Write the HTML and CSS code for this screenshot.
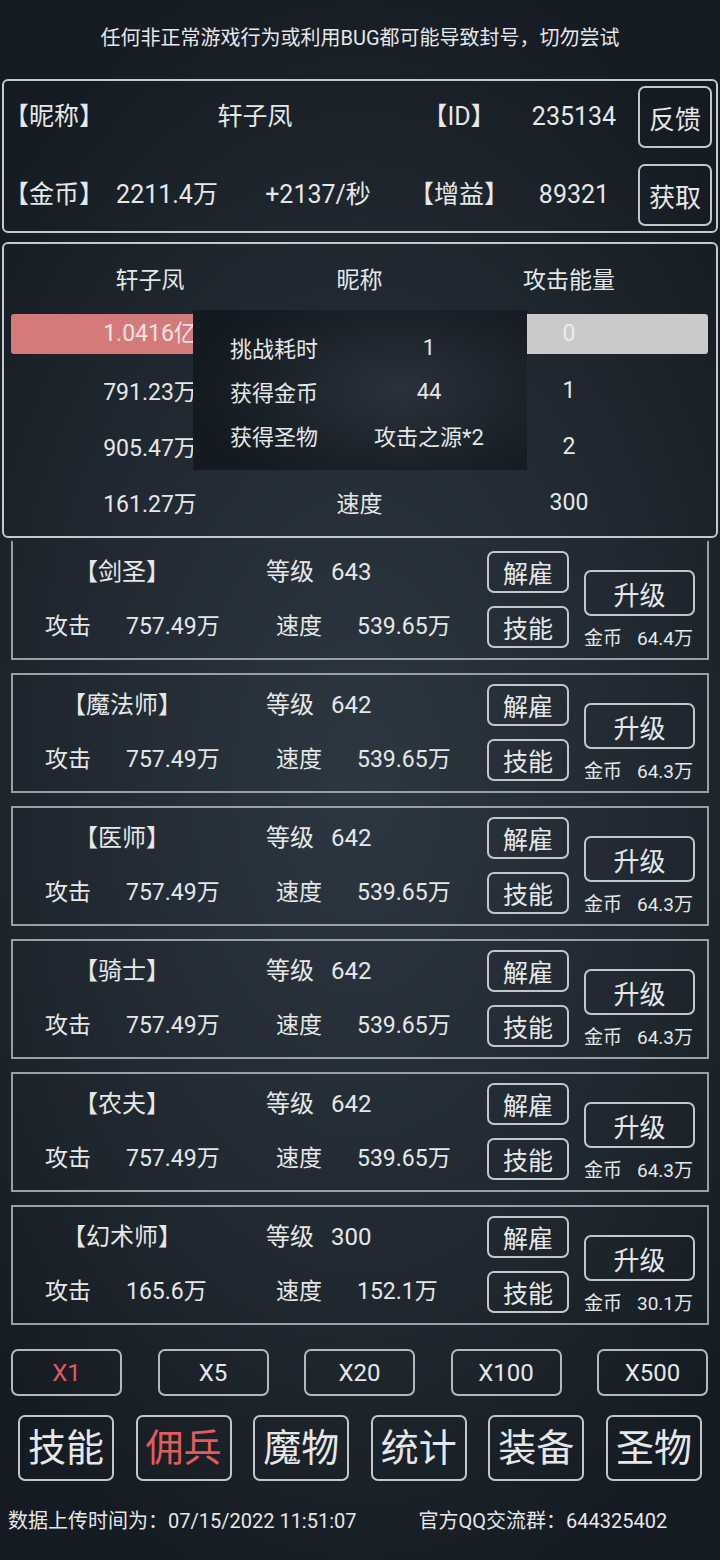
FILE: index.html
```html
<!DOCTYPE html>
<html lang="zh">
<head>
    <meta charset="UTF-8">
    <meta name="viewport" content="width=device-width, initial-scale=1.0">
    <title>佣兵</title>
    <link rel="stylesheet" href="styles.css">
</head>
<body>
    <!-- 提示 -->
    <div class="notice">任何非正常游戏行为或利用BUG都可能导致封号，切勿尝试</div>

    <!-- 玩家信息 -->
    <div class="info">
        <div class="info-row">
            <span class="label">【昵称】</span>
            <span class="cell wide">轩子凤</span>
            <span class="cell">【ID】</span>
            <span class="cell">235134</span>
            <button class="btn side">反馈</button>
        </div>
        <div class="info-row">
            <span class="label">【金币】</span>
            <span class="cell">2211.4万</span>
            <span class="cell">+2137/秒</span>
            <span class="cell">【增益】</span>
            <span class="cell">89321</span>
            <button class="btn side">获取</button>
        </div>
    </div>

    <!-- 战斗面板 -->
    <div class="battle">
        <div class="b-grid">
            <span>轩子凤</span><span>昵称</span><span>攻击能量</span>
            <div class="bar hp">1.0416亿</div><span></span><div class="bar energy">0</div>
            <span>791.23万</span><span></span><span>1</span>
            <span>905.47万</span><span></span><span>2</span>
            <span>161.27万</span><span>速度</span><span>300</span>
        </div>
        <div class="result">
            <span class="r-key">挑战耗时</span><span class="r-val">1</span>
            <span class="r-key">获得金币</span><span class="r-val">44</span>
            <span class="r-key">获得圣物</span><span class="r-val">攻击之源*2</span>
        </div>
    </div>

    <!-- 佣兵列表 -->
    <div class="heroes">
        <div class="hero">
            <div class="stats">
                <div class="s-top"><span class="h-name">【剑圣】</span><span class="lv">等级</span><span class="lv-num">643</span></div>
                <div class="s-bot"><span>攻击</span><span>757.49万</span><span>速度</span><span>539.65万</span></div>
            </div>
            <div class="acts"><button class="btn small">解雇</button><button class="btn small">技能</button></div>
            <div class="up"><button class="btn big">升级</button><div class="cost"><span>金币</span><span>64.4万</span></div></div>
        </div>
        <div class="hero">
            <div class="stats">
                <div class="s-top"><span class="h-name">【魔法师】</span><span class="lv">等级</span><span class="lv-num">642</span></div>
                <div class="s-bot"><span>攻击</span><span>757.49万</span><span>速度</span><span>539.65万</span></div>
            </div>
            <div class="acts"><button class="btn small">解雇</button><button class="btn small">技能</button></div>
            <div class="up"><button class="btn big">升级</button><div class="cost"><span>金币</span><span>64.3万</span></div></div>
        </div>
        <div class="hero">
            <div class="stats">
                <div class="s-top"><span class="h-name">【医师】</span><span class="lv">等级</span><span class="lv-num">642</span></div>
                <div class="s-bot"><span>攻击</span><span>757.49万</span><span>速度</span><span>539.65万</span></div>
            </div>
            <div class="acts"><button class="btn small">解雇</button><button class="btn small">技能</button></div>
            <div class="up"><button class="btn big">升级</button><div class="cost"><span>金币</span><span>64.3万</span></div></div>
        </div>
        <div class="hero">
            <div class="stats">
                <div class="s-top"><span class="h-name">【骑士】</span><span class="lv">等级</span><span class="lv-num">642</span></div>
                <div class="s-bot"><span>攻击</span><span>757.49万</span><span>速度</span><span>539.65万</span></div>
            </div>
            <div class="acts"><button class="btn small">解雇</button><button class="btn small">技能</button></div>
            <div class="up"><button class="btn big">升级</button><div class="cost"><span>金币</span><span>64.3万</span></div></div>
        </div>
        <div class="hero">
            <div class="stats">
                <div class="s-top"><span class="h-name">【农夫】</span><span class="lv">等级</span><span class="lv-num">642</span></div>
                <div class="s-bot"><span>攻击</span><span>757.49万</span><span>速度</span><span>539.65万</span></div>
            </div>
            <div class="acts"><button class="btn small">解雇</button><button class="btn small">技能</button></div>
            <div class="up"><button class="btn big">升级</button><div class="cost"><span>金币</span><span>64.3万</span></div></div>
        </div>
        <div class="hero">
            <div class="stats">
                <div class="s-top"><span class="h-name">【幻术师】</span><span class="lv">等级</span><span class="lv-num">300</span></div>
                <div class="s-bot"><span>攻击</span><span>165.6万</span><span>速度</span><span>152.1万</span></div>
            </div>
            <div class="acts"><button class="btn small">解雇</button><button class="btn small">技能</button></div>
            <div class="up"><button class="btn big">升级</button><div class="cost"><span>金币</span><span>30.1万</span></div></div>
        </div>
    </div>

    <!-- 倍数 -->
    <div class="multi">
        <button class="btn mul active">X1</button>
        <button class="btn mul">X5</button>
        <button class="btn mul">X20</button>
        <button class="btn mul">X100</button>
        <button class="btn mul">X500</button>
    </div>

    <!-- 菜单 -->
    <div class="tabs">
        <button class="btn tab">技能</button>
        <button class="btn tab active">佣兵</button>
        <button class="btn tab">魔物</button>
        <button class="btn tab">统计</button>
        <button class="btn tab">装备</button>
        <button class="btn tab">圣物</button>
    </div>

    <div class="footer">
        <span>数据上传时间为：07/15/2022 11:51:07</span>
        <span>官方QQ交流群：644325402</span>
    </div>
</body>
</html>
```

FILE: styles.css
```css
html {
    background: #161c23;
}
body {
    margin: 0;
    width: 720px;
    height: 1560px;
    overflow: hidden;
    font-family: Roboto, "Noto Sans CJK SC", sans-serif;
    color: #e6e7e8;
    background: radial-gradient(ellipse 70% 55% at 50% 50%, #2d3741 0%, #222b34 50%, #151b22 100%);
}
.btn {
    font-family: inherit;
    color: #e6e7e8;
    background: transparent;
    border: 2px solid #c3c7cb;
    border-radius: 7px;
    padding: 0;
    cursor: pointer;
}
.notice {
    height: 76px;
    line-height: 76px;
    text-align: center;
    font-size: 20px;
}
.info {
    margin: 3px 2px 0;
    border: 2px solid #c5c9cc;
    border-radius: 6px;
    padding: 5px 4px 5px 0;
    display: flex;
    flex-direction: column;
    gap: 16px;
}
.info-row {
    display: grid;
    grid-template-columns: 100px 126px 176px 106px 124px 74px;
    align-items: baseline;
    height: 62px;
    line-height: 62px;
    font-size: 25px;
}
.info-row .btn.side {
    margin-left: 2px;
    width: 74px;
    height: 62px;
    line-height: normal;
    font-size: 26px;
    align-self: center;
}
.info-row .cell {
    text-align: center;
    white-space: nowrap;
}
.info-row .wide {
    grid-column: span 2;
}
.battle {
    position: relative;
    margin: 9px 2px 0;
    border: 2px solid #c5c9cc;
    border-radius: 6px;
    padding: 6px 8px 6px 7px;
}
.b-grid {
    display: grid;
    grid-template-columns: 278px 141px 278px;
    grid-auto-rows: 56px;
    align-items: center;
    text-align: center;
    font-size: 23px;
}
.bar {
    height: 40px;
    line-height: 40px;
    border-radius: 3px;
}
.hp {
    background: #d57a7b;
    color: #f6e4e4;
}
.energy {
    background: #cacaca;
    color: #ececec;
}
.result {
    position: absolute;
    left: 189px;
    top: 66px;
    width: 334px;
    height: 160px;
    box-sizing: border-box;
    padding: 15px 22px 13px 37px;
    background: radial-gradient(ellipse 60% 70% at 62% 50%, #29323b 0%, #1b232b 60%, #141a21 100%);
    display: grid;
    grid-template-columns: 123px 152px;
    grid-auto-rows: 44px;
    align-items: center;
    font-size: 22px;
}
.r-val {
    text-align: center;
    white-space: nowrap;
}
.heroes {
    margin: 2px 11px 0;
    display: flex;
    flex-direction: column;
    gap: 13px;
}
.hero {
    height: 120px;
    box-sizing: border-box;
    border: 2px solid #9aa0a6;
    padding: 9px 12px 10px 0;
    display: flex;
}
.hero:first-child {
    border-top-color: transparent;
}
.stats {
    width: 474px;
    display: flex;
    flex-direction: column;
    gap: 13px;
}
.s-top {
    height: 42px;
    line-height: 42px;
    font-size: 24px;
    white-space: nowrap;
}
.s-top span {
    display: inline-block;
}
.h-name {
    width: 218px;
    text-align: center;
}
.lv {
    margin-left: 35px;
}
.lv-num {
    margin-left: 17px;
}
.s-bot {
    height: 42px;
    line-height: 42px;
    display: grid;
    grid-template-columns: 81px 150px 81px auto;
    align-items: baseline;
    padding-left: 32px;
    font-size: 23px;
    white-space: nowrap;
}
.acts {
    width: 82px;
    display: flex;
    flex-direction: column;
    gap: 13px;
}
.btn.small {
    height: 42px;
    font-size: 25px;
}
.up {
    width: 111px;
    margin-left: 15px;
    padding-top: 19px;
}
.btn.big {
    width: 111px;
    height: 46px;
    font-size: 26px;
}
.cost {
    margin-top: 12px;
    line-height: 22px;
    display: flex;
    justify-content: space-between;
    align-items: baseline;
    padding-right: 2px;
    font-size: 19px;
    white-space: nowrap;
}
.multi {
    margin: 24px 12px 0 11px;
    display: flex;
    justify-content: space-between;
}
.btn.mul {
    width: 111px;
    height: 47px;
    font-size: 24px;
    border-color: #b4b9be;
}
.active {
    color: #e35c5c;
}
.tabs {
    margin: 19px 18px 0;
    display: flex;
    justify-content: space-between;
}
.btn.tab {
    width: 96px;
    height: 66px;
    font-size: 38px;
    line-height: 1;
}
.footer {
    margin-top: 25px;
    padding-left: 8px;
    line-height: 30px;
    font-size: 20px;
    display: flex;
    gap: 62px;
    white-space: nowrap;
}
```
